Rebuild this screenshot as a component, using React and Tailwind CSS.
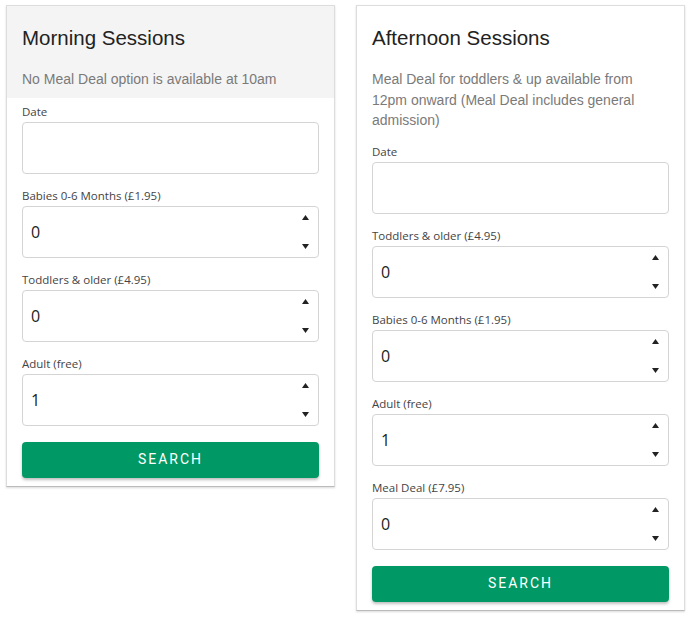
import React from "react";

function Spinner() {
  return (
    <div className="flex flex-col justify-between h-full py-[8px] pr-[9px]">
      <svg width="7" height="5" viewBox="0 0 7 5">
        <path d="M3.5 0 L7 5 L0 5 Z" fill="#222" />
      </svg>
      <svg width="7" height="5" viewBox="0 0 7 5">
        <path d="M0 0 L7 0 L3.5 5 Z" fill="#222" />
      </svg>
    </div>
  );
}

function Field({ label, value, isDate }) {
  return (
    <div className="mb-[13px]">
      <div className="text-[11.5px] leading-[17px] text-[#444] font-['Open_Sans',sans-serif] mb-[2px]">
        {label}
      </div>
      <div className="h-[52px] border border-[#d4d4d4] rounded-[4px] bg-white flex items-center justify-between">
        {!isDate && (
          <>
            <span className="pl-[8px] text-[16px] text-[#222] font-['Open_Sans',sans-serif]">
              {value}
            </span>
            <Spinner />
          </>
        )}
      </div>
    </div>
  );
}

function Card({ title, note, grey, fields }) {
  return (
    <div className="w-[329px] border border-[#ddd] border-b-[#bbb] bg-white shadow-[0_1px_2px_rgba(0,0,0,0.15)]">
      <div className={`px-[15px] pt-[20px] ${grey ? "bg-[#f4f4f4] pb-[8px]" : "bg-white pb-[7px]"}`}>
        <h2 className="text-[20.5px] leading-[24px] text-[#222] font-['Liberation_Sans',Arial,sans-serif]">
          {title}
        </h2>
        <p className="mt-[19px] text-[14px] leading-[20.5px] text-[#7a7a7a] font-['Liberation_Sans',Arial,sans-serif]">
          {note}
        </p>
      </div>
      <div className="px-[15px] pt-[5px] pb-[8px]">
        {fields.map((f) => (
          <Field key={f.label} {...f} />
        ))}
        <button className="mt-[3px] w-full h-[36px] rounded-[4px] bg-[#009966] text-white text-[14px] font-normal tracking-[2px] font-['Roboto',sans-serif] shadow-[0_2px_3px_rgba(0,0,0,0.25)]">
          SEARCH
        </button>
      </div>
    </div>
  );
}

export default function App() {
  return (
    <div className="min-h-screen bg-white flex items-start gap-[21px] pl-[6px] pt-[5px]">
      <Card
        grey
        title="Morning Sessions"
        note="No Meal Deal option is available at 10am"
        fields={[
          { label: "Date", isDate: true },
          { label: "Babies 0-6 Months (£1.95)", value: "0" },
          { label: "Toddlers & older (£4.95)", value: "0" },
          { label: "Adult (free)", value: "1" },
        ]}
      />
      <Card
        title="Afternoon Sessions"
        note="Meal Deal for toddlers & up available from 12pm onward (Meal Deal includes general admission)"
        fields={[
          { label: "Date", isDate: true },
          { label: "Toddlers & older (£4.95)", value: "0" },
          { label: "Babies 0-6 Months (£1.95)", value: "0" },
          { label: "Adult (free)", value: "1" },
          { label: "Meal Deal (£7.95)", value: "0" },
        ]}
      />
    </div>
  );
}
